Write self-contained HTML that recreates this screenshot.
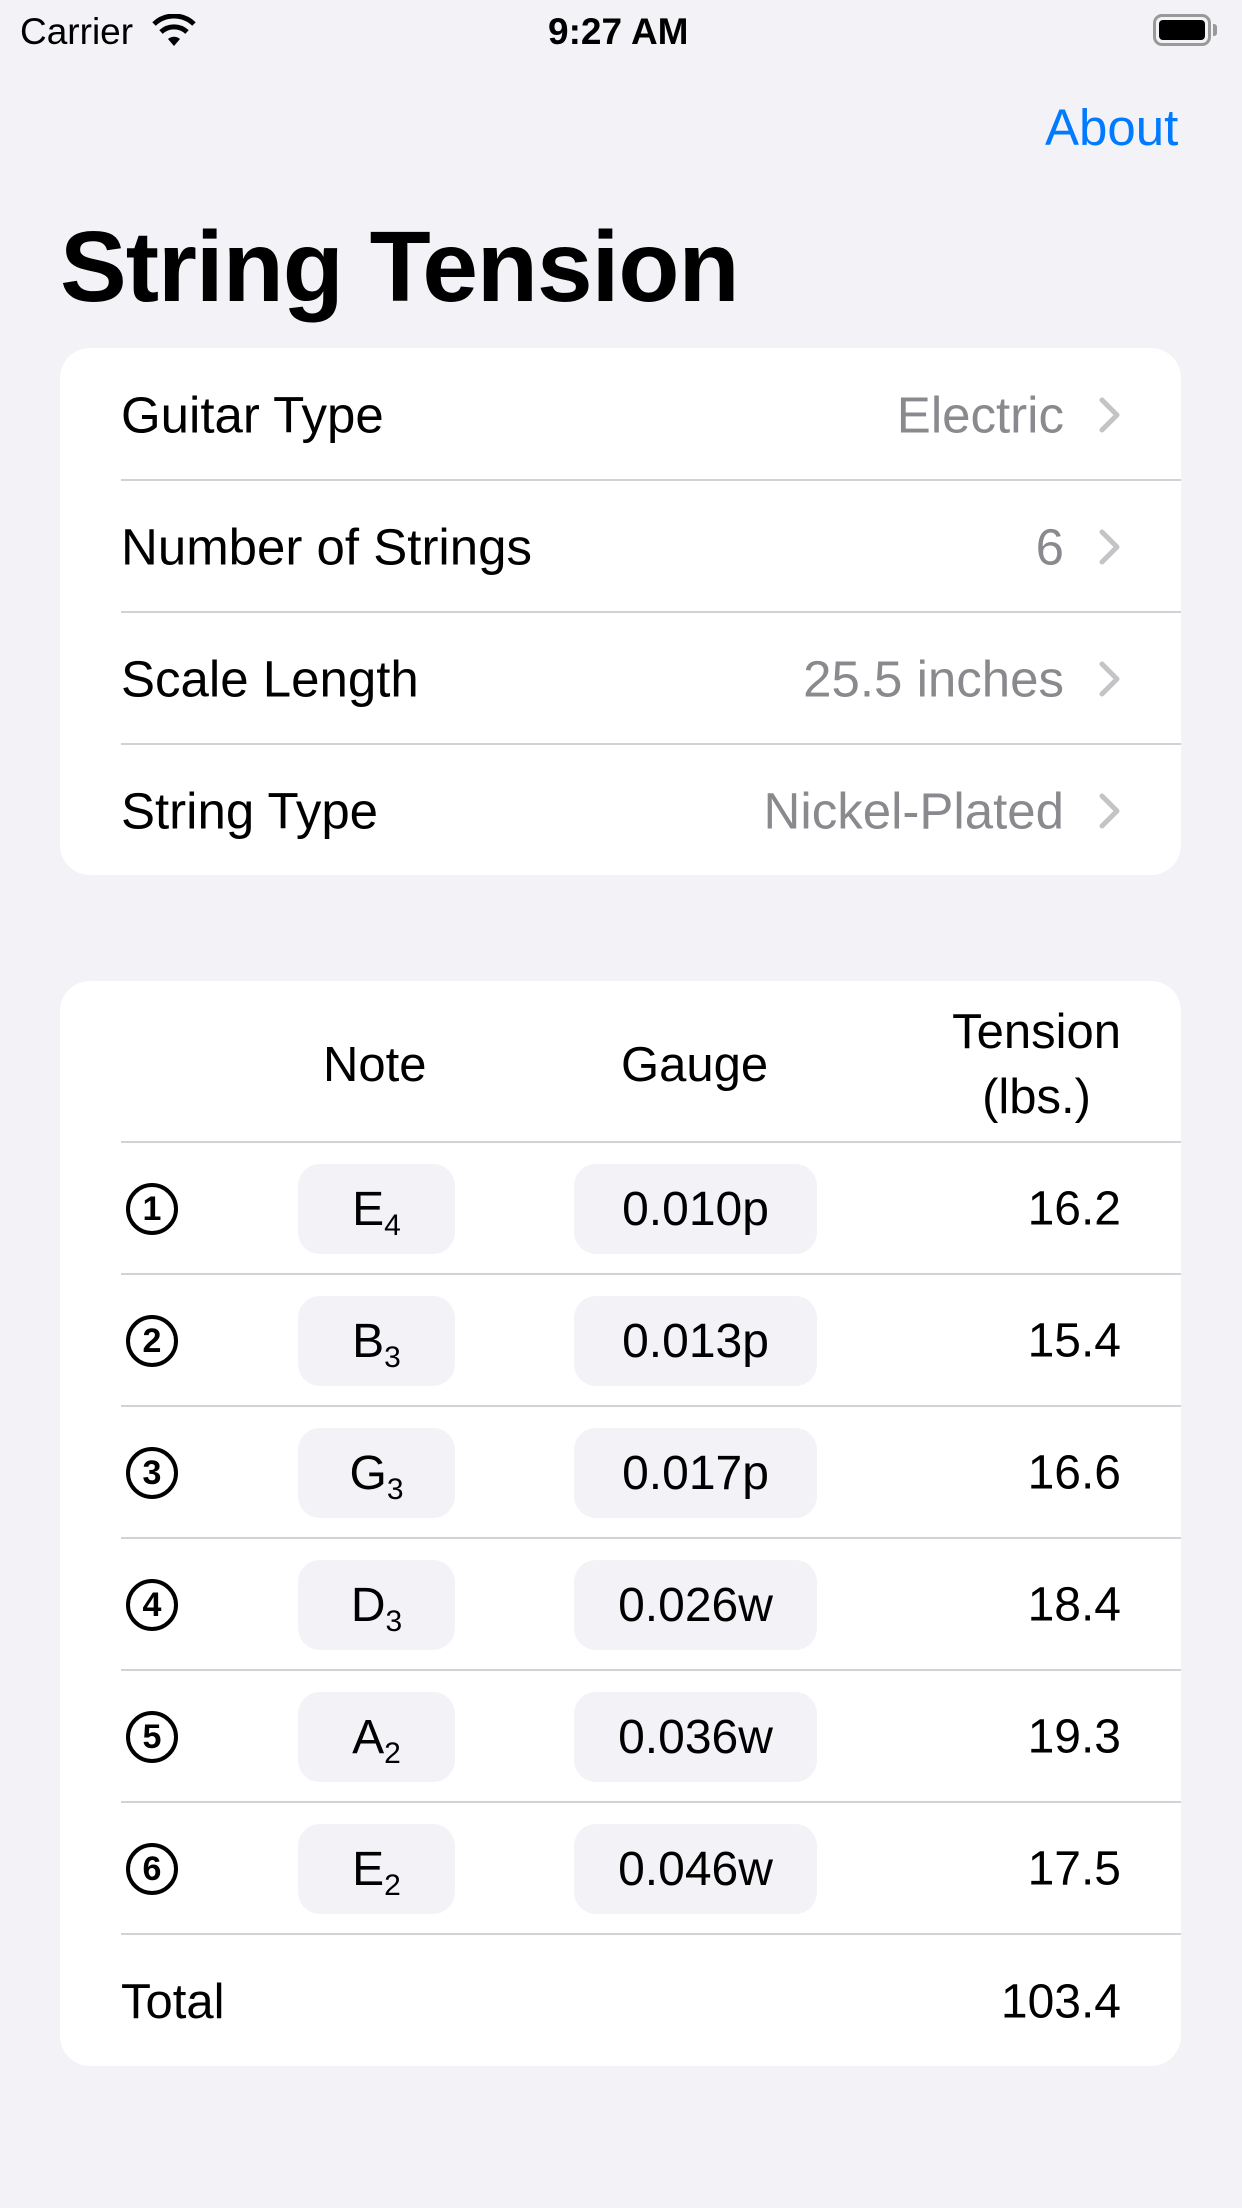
<!DOCTYPE html>
<html><head><meta charset="utf-8"><style>
*{margin:0;padding:0;box-sizing:border-box}
body{width:1242px;height:2208px;background:#f2f2f7;font-family:"Liberation Sans",sans-serif;color:#000;position:relative;overflow:hidden}
.a{position:absolute;white-space:nowrap}
.card{position:absolute;left:60px;width:1121px;background:#fff;border-radius:30px}
.sep{position:absolute;left:61px;right:0;height:2px;background:#d1d1d6}
.lbl{position:absolute;left:61px;font-size:51px;transform:translateY(-50%)}
.val{position:absolute;right:117px;font-size:51px;color:#8a8a8e;transform:translateY(-50%)}
.chev{position:absolute;right:60px;transform:translateY(-50%)}
.pill{position:absolute;background:#f2f2f7;border-radius:22px;height:90px;display:flex;align-items:center;justify-content:center;font-size:48px}
.circ{position:absolute;left:66px;width:52px;height:52px;border:4px solid #000;border-radius:50%;font-size:34px;font-weight:bold;display:flex;align-items:center;justify-content:center}
.ten{position:absolute;right:60px;font-size:48px;transform:translateY(-50%)}
.sb{font-size:30px;position:relative;top:10px}
</style></head><body>
<div class="a" style="left:20px;top:11px;font-size:37px">Carrier</div>
<svg class="a" style="left:152px;top:14px" width="44" height="34" viewBox="0 0 44 34"><path d="M22 32 L16 25 A9 9 0 0 1 28 25 Z" fill="#000"/><path d="M9 18 A19 19 0 0 1 35 18" stroke="#000" stroke-width="5" fill="none"/><path d="M2 10 A29 29 0 0 1 42 10" stroke="#000" stroke-width="5" fill="none"/></svg>
<div class="a" style="left:548px;top:11px;font-size:37px;font-weight:bold">9:27 AM</div>
<div class="a" style="left:1153px;top:14px;width:58px;height:32px;border:3px solid #999;border-radius:9px;padding:3px"><div style="width:100%;height:100%;background:#000;border-radius:4px"></div></div>
<div class="a" style="left:1213px;top:24px;width:4px;height:12px;background:#999;border-radius:0 3px 3px 0"></div>
<div class="a" style="left:1045px;top:98px;font-size:51px;color:#007aff">About</div>
<div class="a" style="left:60px;top:210px;font-size:100px;font-weight:bold;letter-spacing:-1px">String Tension</div>

<div class="card" style="top:348px;height:527px">
<div class="lbl" style="top:67px">Guitar Type</div><div class="val" style="top:67px">Electric</div>
<div class="sep" style="top:131px"></div>
<div class="lbl" style="top:199px">Number of Strings</div><div class="val" style="top:199px">6</div>
<div class="sep" style="top:263px"></div>
<div class="lbl" style="top:331px">Scale Length</div><div class="val" style="top:331px">25.5 inches</div>
<div class="sep" style="top:395px"></div>
<div class="lbl" style="top:463px">String Type</div><div class="val" style="top:463px">Nickel-Plated</div>
<svg class="chev" style="top:67px" width="22" height="36" viewBox="0 0 22 36"><path d="M3 3 L18 18 L3 33" stroke="#c4c4c7" stroke-width="5" fill="none" stroke-linecap="round" stroke-linejoin="round"/></svg>
<svg class="chev" style="top:199px" width="22" height="36" viewBox="0 0 22 36"><path d="M3 3 L18 18 L3 33" stroke="#c4c4c7" stroke-width="5" fill="none" stroke-linecap="round" stroke-linejoin="round"/></svg>
<svg class="chev" style="top:331px" width="22" height="36" viewBox="0 0 22 36"><path d="M3 3 L18 18 L3 33" stroke="#c4c4c7" stroke-width="5" fill="none" stroke-linecap="round" stroke-linejoin="round"/></svg>
<svg class="chev" style="top:463px" width="22" height="36" viewBox="0 0 22 36"><path d="M3 3 L18 18 L3 33" stroke="#c4c4c7" stroke-width="5" fill="none" stroke-linecap="round" stroke-linejoin="round"/></svg>
</div>

<div class="card" style="top:981px;height:1085px">
<div class="a" style="left:263px;top:56px;font-size:49px">Note</div>
<div class="a" style="left:561px;top:56px;font-size:49px">Gauge</div>
<div class="a" style="right:60px;top:19px;font-size:49px;text-align:center;line-height:65px">Tension<br>(lbs.)</div>
<div class="sep" style="top:160px"></div>

<div class="circ" style="top:202px">1</div><div class="pill" style="left:238px;width:157px;top:183px"><span>E<span class="sb">4</span></span></div><div class="pill" style="left:514px;width:243px;top:183px">0.010p</div><div class="ten" style="top:228px">16.2</div>
<div class="sep" style="top:292px"></div>
<div class="circ" style="top:334px">2</div><div class="pill" style="left:238px;width:157px;top:315px"><span>B<span class="sb">3</span></span></div><div class="pill" style="left:514px;width:243px;top:315px">0.013p</div><div class="ten" style="top:360px">15.4</div>
<div class="sep" style="top:424px"></div>
<div class="circ" style="top:466px">3</div><div class="pill" style="left:238px;width:157px;top:447px"><span>G<span class="sb">3</span></span></div><div class="pill" style="left:514px;width:243px;top:447px">0.017p</div><div class="ten" style="top:492px">16.6</div>
<div class="sep" style="top:556px"></div>
<div class="circ" style="top:598px">4</div><div class="pill" style="left:238px;width:157px;top:579px"><span>D<span class="sb">3</span></span></div><div class="pill" style="left:514px;width:243px;top:579px">0.026w</div><div class="ten" style="top:624px">18.4</div>
<div class="sep" style="top:688px"></div>
<div class="circ" style="top:730px">5</div><div class="pill" style="left:238px;width:157px;top:711px"><span>A<span class="sb">2</span></span></div><div class="pill" style="left:514px;width:243px;top:711px">0.036w</div><div class="ten" style="top:756px">19.3</div>
<div class="sep" style="top:820px"></div>
<div class="circ" style="top:862px">6</div><div class="pill" style="left:238px;width:157px;top:843px"><span>E<span class="sb">2</span></span></div><div class="pill" style="left:514px;width:243px;top:843px">0.046w</div><div class="ten" style="top:888px">17.5</div>
<div class="sep" style="top:952px"></div>
<div class="lbl" style="top:1021px;font-size:49px">Total</div><div class="ten" style="top:1021px">103.4</div>
</div>
</body></html>
